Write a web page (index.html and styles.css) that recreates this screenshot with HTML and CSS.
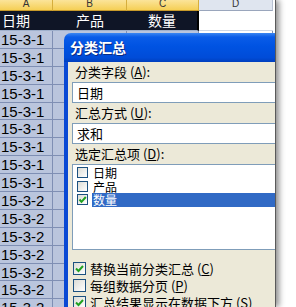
FILE: index.html
```html
<!DOCTYPE html>
<html lang="zh-CN">
<head>
    <meta charset="UTF-8">
    <meta name="viewport" content="width=device-width, initial-scale=1.0">
    <title>分类汇总</title>
    <link rel="stylesheet" href="styles.css">
</head>
<body>
    <div class="shot">
        <div class="sheet">
            <div class="row colhead">
                <div class="cell col-a sel">A</div>
                <div class="cell col-b sel">B</div>
                <div class="cell col-c sel">C</div>
                <div class="cell col-d">D</div>
            </div>
            <div class="row titles">
                <div class="cell col-a">日期</div>
                <div class="cell col-b">产品</div>
                <div class="cell col-c">数量</div>
                <div class="cell col-d"></div>
            </div>
            <div class="row data"><div class="cell col-a">15-3-1</div><div class="cell col-b"></div><div class="cell col-c"></div><div class="cell col-d"></div></div>
            <div class="row data"><div class="cell col-a">15-3-1</div><div class="cell col-b"></div><div class="cell col-c"></div><div class="cell col-d"></div></div>
            <div class="row data"><div class="cell col-a">15-3-1</div><div class="cell col-b"></div><div class="cell col-c"></div><div class="cell col-d"></div></div>
            <div class="row data"><div class="cell col-a">15-3-1</div><div class="cell col-b"></div><div class="cell col-c"></div><div class="cell col-d"></div></div>
            <div class="row data"><div class="cell col-a">15-3-1</div><div class="cell col-b"></div><div class="cell col-c"></div><div class="cell col-d"></div></div>
            <div class="row data"><div class="cell col-a">15-3-1</div><div class="cell col-b"></div><div class="cell col-c"></div><div class="cell col-d"></div></div>
            <div class="row data"><div class="cell col-a">15-3-1</div><div class="cell col-b"></div><div class="cell col-c"></div><div class="cell col-d"></div></div>
            <div class="row data"><div class="cell col-a">15-3-1</div><div class="cell col-b"></div><div class="cell col-c"></div><div class="cell col-d"></div></div>
            <div class="row data"><div class="cell col-a">15-3-1</div><div class="cell col-b"></div><div class="cell col-c"></div><div class="cell col-d"></div></div>
            <div class="row data"><div class="cell col-a">15-3-2</div><div class="cell col-b"></div><div class="cell col-c"></div><div class="cell col-d"></div></div>
            <div class="row data"><div class="cell col-a">15-3-2</div><div class="cell col-b"></div><div class="cell col-c"></div><div class="cell col-d"></div></div>
            <div class="row data"><div class="cell col-a">15-3-2</div><div class="cell col-b"></div><div class="cell col-c"></div><div class="cell col-d"></div></div>
            <div class="row data"><div class="cell col-a">15-3-2</div><div class="cell col-b"></div><div class="cell col-c"></div><div class="cell col-d"></div></div>
            <div class="row data"><div class="cell col-a">15-3-2</div><div class="cell col-b"></div><div class="cell col-c"></div><div class="cell col-d"></div></div>
            <div class="row data"><div class="cell col-a">15-3-2</div><div class="cell col-b"></div><div class="cell col-c"></div><div class="cell col-d"></div></div>
            <div class="row data"><div class="cell col-a">15-3-2</div><div class="cell col-b"></div><div class="cell col-c"></div><div class="cell col-d"></div></div>
        </div>

        <!-- the dialog floats over the sheet -->
        <div class="dialog">
            <div class="titlebar">分类汇总</div>
            <div class="dlg-body">
                <div class="label">分类字段 (<u>A</u>):</div>
                <div class="combo">日期</div>
                <div class="label">汇总方式 (<u>U</u>):</div>
                <div class="combo">求和</div>
                <div class="label">选定汇总项 (<u>D</u>):</div>
                <div class="listbox">
                    <div class="item">
                        <span class="box"></span><span class="item-text">日期</span>
                    </div>
                    <div class="item">
                        <span class="box"></span><span class="item-text">产品</span>
                    </div>
                    <div class="item selected">
                        <span class="box"><svg viewBox="0 0 11 11" width="11" height="11"><path d="M2.5 5.5 L4.5 7.8 L8.8 3" fill="none" stroke="#21a121" stroke-width="2"/></svg></span><span class="item-text">数量</span>
                    </div>
                </div>
                <div class="checks">
                    <div class="check">
                        <span class="box big"><svg viewBox="0 0 13 13" width="13" height="13"><path d="M3 6.5 L5.5 9 L10 4" fill="none" stroke="#21a121" stroke-width="2"/></svg></span>
                        <span>替换当前分类汇总 (<u>C</u>)</span>
                    </div>
                    <div class="check">
                        <span class="box big"></span>
                        <span>每组数据分页 (<u>P</u>)</span>
                    </div>
                    <div class="check">
                        <span class="box big"><svg viewBox="0 0 13 13" width="13" height="13"><path d="M3 6.5 L5.5 9 L10 4" fill="none" stroke="#21a121" stroke-width="2"/></svg></span>
                        <span>汇总结果显示在数据下方 (<u>S</u>)</span>
                    </div>
                </div>
            </div>
        </div>
    </div>
</body>
</html>
```

FILE: styles.css
```css
body {
    margin: 0;
    background-color: #ffffff;
    font-family: "Noto Sans CJK SC", "Noto Sans", sans-serif;
}
.shot {
    position: relative;
    width: 275px;
    height: 307px;
    overflow: hidden;
    border-right: 1px solid #5a5a5a;
    box-shadow: 3px 0 6px rgba(0, 0, 0, 0.45);
}
.sheet {
    display: flex;
    flex-direction: column;
}
.row {
    display: flex;
}
.cell {
    box-sizing: border-box;
    flex: none;
    overflow: hidden;
    white-space: nowrap;
}
.col-a { width: 53px; }
.col-b { width: 74px; }
.col-c { width: 72px; }
.col-d { width: 74px; }

/* column letters */
.colhead {
    height: 11px;
}
.colhead .cell {
    font-family: "Liberation Sans", sans-serif;
    font-size: 10px;
    line-height: 8px;
    text-align: center;
    color: #333;
    background-color: #dfe5ef;
    border-right: 1px solid #b8c2d2;
    border-bottom: 1px solid #9aa6bc;
}
.colhead .cell.sel {
    background: linear-gradient(#fbe49a, #f5cf55);
    border-right: 1px solid #d6ae3c;
    border-bottom: 1px solid #c89a2a;
}

/* header row */
.titles {
    height: 20px;
}
.titles .cell {
    font-size: 14px;
    line-height: 19px;
    color: #ffffff;
    background-color: #0f1526;
    border-bottom: 1px solid #9fb0cc;
}
.titles .col-a {
    padding-left: 2px;
}
.titles .col-b,
.titles .col-c {
    text-align: center;
}
.titles .col-c {
    border-right: 2px solid #000;
}
.titles .col-d {
    background-color: #ffffff;
    border-bottom: 1px solid #cfd8e6;
}

/* data rows */
.data {
    height: 17.9px;
}
.data .cell {
    font-family: "Liberation Sans", sans-serif;
    font-size: 15px;
    line-height: 17px;
    color: #000;
    background-color: #bac5dd;
    border-right: 1px solid #7f8fb4;
    border-bottom: 1px solid #7f8fb4;
}
.data .col-a {
    padding-left: 1px;
}
.data .col-d {
    background-color: #ffffff;
}

/* dialog */
.dialog {
    position: absolute;
    left: 64px;
    top: 33px;
    width: 250px;
    height: 290px;
}
.titlebar {
    height: 29px;
    box-sizing: border-box;
    padding-left: 6px;
    border-radius: 7px 7px 0 0;
    background: linear-gradient(#3a86f2 0%, #0a5ce8 14%, #0053e2 45%, #004cd8 85%, #003fbe 100%);
    color: #ffffff;
    font-size: 14px;
    font-weight: bold;
    line-height: 29px;
    text-shadow: 1px 1px 0 #0c2a80;
}
.dlg-body {
    display: flex;
    flex-direction: column;
    height: 262px;
    background-color: #ece9d8;
    border-left: 4px solid #0a49d4;
    box-sizing: border-box;
    padding-left: 4px;
    font-size: 13px;
    color: #000;
}
.label {
    height: 20px;
    line-height: 20px;
    padding-left: 3px;
}
.label u,
.check u {
    text-decoration: underline;
}
.combo {
    height: 21px;
    box-sizing: border-box;
    border: 1px solid #7f9db9;
    background-color: #ffffff;
    padding-left: 4px;
    line-height: 19px;
}
.listbox {
    height: 86px;
    box-sizing: border-box;
    border: 1px solid #7f9db9;
    background-color: #ffffff;
    padding-top: 1px;
    font-size: 12px;
}
.item {
    display: flex;
    align-items: center;
    height: 13.5px;
    padding-left: 4px;
}
.box {
    display: flex;
    flex: none;
    width: 11px;
    height: 11px;
    box-sizing: border-box;
    border: 1px solid #1c5180;
    background: linear-gradient(135deg, #dcdcd5, #ffffff);
}
.box svg {
    margin: -1px;
}
.item-text {
    flex: 1;
    margin-left: 4px;
    padding-left: 1px;
    line-height: 13.5px;
}
.item.selected .item-text {
    background-color: #316ac5;
    color: #ffffff;
}
.checks {
    display: flex;
    flex-direction: column;
    margin-top: 10px;
}
.check {
    display: flex;
    align-items: center;
    height: 17px;
    padding-left: 1px;
    gap: 4px;
}
.box.big {
    width: 13px;
    height: 13px;
}
```
